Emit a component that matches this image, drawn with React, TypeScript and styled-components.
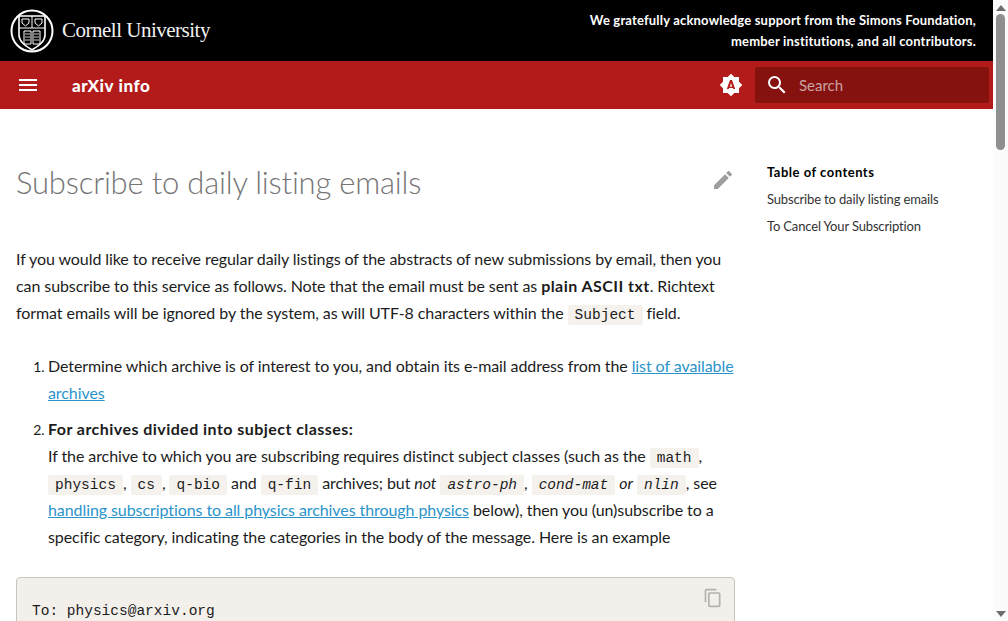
import React from 'react';
import styled, { createGlobalStyle } from 'styled-components';

const Global = createGlobalStyle`
	body {
		margin: 0;
		background: #fff;
		color: #1c1c1c;
		font-family: "Lato", sans-serif;
		font-size: 16px;
		line-height: 27px;
		letter-spacing: -0.08px;
	}
`

const Shell = styled.div`
	display: flex;
	height: 100vh;
	overflow: hidden;
`

const Page = styled.div`
	flex: 1;
	min-width: 0;
`

const ScrollRail = styled.div`
	width: 15px;
	flex: none;
	background: #fbfbfb;
	display: flex;
	flex-direction: column;
	align-items: center;
`

const ScrollThumb = styled.div`
	width: 9px;
	height: 136px;
	margin-top: 3px;
	background: #8f8f8f;
	border-radius: 5px;
`

const ScrollSpacer = styled.div`
	flex: 1;
`

const Arrow = styled.div<{ $down?: boolean }>`
	width: 0;
	height: 0;
	margin: ${p => (p.$down ? '0 0 4px' : '5px 0 0')};
	border-left: 5px solid transparent;
	border-right: 5px solid transparent;
	${p => (p.$down ? 'border-top: 6px solid #6e6e6e;' : 'border-bottom: 6px solid #6e6e6e;')}
`

const TopBar = styled.div`
	background: #000;
	color: #fff;
	height: 61px;
	display: flex;
	align-items: center;
	justify-content: space-between;
	padding: 0 17px 0 10px;
`

const Brand = styled.div`
	display: flex;
	align-items: center;
	gap: 8px;
	font-family: "Liberation Serif", serif;
	font-size: 21px;
	letter-spacing: -0.5px;
	color: #f2f2f2;
`

const Thanks = styled.div`
	text-align: right;
	font-size: 13px;
	font-weight: 700;
	line-height: 21px;
	letter-spacing: 0.18px;
`

const NavBar = styled.header`
	background: #b31b1b;
	color: #fff;
	height: 48px;
	display: flex;
	align-items: center;
	padding: 0 4px 0 16px;
`

const NavTitle = styled.div`
	font-size: 17px;
	font-weight: 900;
	letter-spacing: 0.6px;
	margin-left: 32px;
	flex: 1;
`

const SearchBox = styled.div`
	width: 234px;
	height: 36px;
	margin-left: 12px;
	background: #85120f;
	border-radius: 2px;
	display: flex;
	align-items: center;
	gap: 10px;
	padding-left: 10px;
	box-sizing: border-box;
	font-size: 15px;
	letter-spacing: 0;
	color: #c9a3a2;

	svg {
		color: #fff;
	}
`

const Layout = styled.div`
	display: flex;
`

const Main = styled.main`
	width: 719px;
	padding: 0 0 0 16px;
	position: relative;
`

const Title = styled.h1`
	margin: 53px 0 0;
	height: 40px;
	font-size: 31px;
	line-height: 40px;
	font-weight: 300;
	letter-spacing: -0.2px;
	color: #757575;
`

const EditLink = styled.a`
	position: absolute;
	top: 59px;
	right: 0;
	color: #9e9e9e;
	display: block;
	height: 24px;
`

const Paragraph = styled.p`
	margin: 43px 0 0;
`

const Steps = styled.ol`
	margin: 26px 0 0;
	padding: 0 0 0 32px;

	& > li + li {
		margin-top: 9px;
	}

	& > li::marker {
		font-size: 14px;
	}
`

const Strong = styled.strong`
	letter-spacing: 0.45px;
`

const Code = styled.code`
	font-family: "Liberation Mono", monospace;
	font-size: 14.5px;
	line-height: 1;
	letter-spacing: 0;
	background: #f5f2ee;
	border-radius: 2px;
	padding: 2px 7px;
`

const DocLink = styled.a`
	color: #2a94c9;
	text-decoration: underline;
`

const CodeBlock = styled.div`
	position: relative;
	margin-top: 27px;
	background: #f3f0ec;
	border: 1px solid #c9c6c1;
	border-radius: 4px;
	padding: 20px 15px;
	font-family: "Liberation Mono", monospace;
	font-size: 14.5px;
	line-height: 27px;
	letter-spacing: 0;
	white-space: pre;
`

const CopyButton = styled.button`
	position: absolute;
	top: 10px;
	right: 11px;
	padding: 0;
	border: 0;
	background: none;
	color: #b4b1ad;
	height: 20px;
`

const Toc = styled.nav`
	margin: 50px 0 0 32px;
	font-size: 13px;
	letter-spacing: -0.15px;
	color: #333;
`

const TocTitle = styled.div`
	font-weight: 700;
	letter-spacing: 0.5px;
	color: #000;
`

const Icon: React.FC<{ d: string; size?: number }> = ({ d, size = 24 }) => (
	<svg width={size} height={size} viewBox="0 0 24 24" fill="currentColor"><path d={d} /></svg>
)

const Seal = () => (
	<svg width="44" height="44" viewBox="0 0 44 44" fill="none" stroke="#fff">
		<circle cx="22" cy="22" r="20.5" strokeWidth="2" />
		<path d="M9 7h26v19c0 7-7 11-13 15-6-4-13-8-13-15z" strokeWidth="1.6" />
		<path d="M9 19h26M22 7v12" strokeWidth="1" />
		<path d="M14 22h7v13h-7zM23 22h7v13h-7z" strokeWidth="1" />
		<path d="M15 25h5M15 28h5M15 31h5M24 25h5M24 28h5M24 31h5" strokeWidth="0.8" />
		<path d="M12 10h7v4l-3.5 3-3.5-3zM25 10h7v4l-3.5 3-3.5-3z" strokeWidth="1" />
	</svg>
)

const App: React.FC = () => {
	return (
		<>
			<Global />
			<Shell>
				<Page>
					<TopBar>
						<Brand><Seal />Cornell University</Brand>
						<Thanks>
							We gratefully acknowledge support from the Simons Foundation,<br />
							member institutions, and all contributors.
						</Thanks>
					</TopBar>
					<NavBar>
						<Icon d="M3 6h18v2H3V6m0 5h18v2H3v-2m0 5h18v2H3v-2z" />
						<NavTitle>arXiv info</NavTitle>
						<Icon d="M14.3 16 14 15H10L9.7 16H7.8L11 7H13L16.2 16H14.3M20 8.69V4H15.31L12 .69 8.69 4H4V8.69L.69 12 4 15.31V20H8.69L12 23.31 15.31 20H20V15.31L23.31 12 20 8.69M10.85 13.65H13.15L12 10 10.85 13.65Z" />
						<SearchBox>
							<Icon d="M9.5,3A6.5,6.5 0 0,1 16,9.5C16,11.11 15.41,12.59 14.44,13.73L14.71,14H15.5L20.5,19L19,20.5L14,15.5V14.71L13.73,14.44C12.59,15.41 11.11,16 9.5,16A6.5,6.5 0 0,1 3,9.5A6.5,6.5 0 0,1 9.5,3M9.5,5C7,5 5,7 5,9.5C5,12 7,14 9.5,14C12,14 14,12 14,9.5C14,7 12,5 9.5,5Z" />
							Search
						</SearchBox>
					</NavBar>
					<Layout>
						<Main>
							<EditLink><Icon d="M20.71,7.04C21.1,6.65 21.1,6 20.71,5.63L18.37,3.29C18,2.9 17.35,2.9 16.96,3.29L15.12,5.12L18.87,8.87M3,17.25V21H6.75L17.81,9.93L14.06,6.18L3,17.25Z" /></EditLink>
							<Title>Subscribe to daily listing emails</Title>
							<Paragraph>
								If you would like to receive regular daily listings of the abstracts of new submissions by email, then you can subscribe to this service as follows. Note that the email must be sent as <Strong>plain ASCII txt</Strong>. Richtext format emails will be ignored by the system, as will UTF-8 characters within the <Code>Subject</Code> field.
							</Paragraph>
							<Steps>
								<li>Determine which archive is of interest to you, and obtain its e-mail address from the <DocLink>list of available archives</DocLink></li>
								<li>
									<Strong>For archives divided into subject classes:</Strong><br />
									If the archive to which you are subscribing requires distinct subject classes (such as the <Code>math</Code>, <Code>physics</Code>, <Code>cs</Code>, <Code>q-bio</Code> and <Code>q-fin</Code> archives; but <em>not</em> <Code><em>astro-ph</em></Code>, <Code><em>cond-mat</em></Code> <em>or</em> <Code><em>nlin</em></Code>, see <DocLink>handling subscriptions to all physics archives through physics</DocLink> below), then you (un)subscribe to a specific category, indicating the categories in the body of the message. Here is an example
								</li>
							</Steps>
							<CodeBlock>
								<CopyButton><Icon size={20} d="M19 21H8V7h11m0-2H8a2 2 0 0 0-2 2v14a2 2 0 0 0 2 2h11a2 2 0 0 0 2-2V7a2 2 0 0 0-2-2m-3-4H4a2 2 0 0 0-2 2v14h2V3h12V1z" /></CopyButton>
								{'To: physics@arxiv.org'}
							</CodeBlock>
						</Main>
						<Toc>
							<TocTitle>Table of contents</TocTitle>
							<div>Subscribe to daily listing emails</div>
							<div>To Cancel Your Subscription</div>
						</Toc>
					</Layout>
				</Page>
				<ScrollRail>
					<Arrow />
					<ScrollThumb />
					<ScrollSpacer />
					<Arrow $down />
				</ScrollRail>
			</Shell>
		</>
	)
}

export default App;
